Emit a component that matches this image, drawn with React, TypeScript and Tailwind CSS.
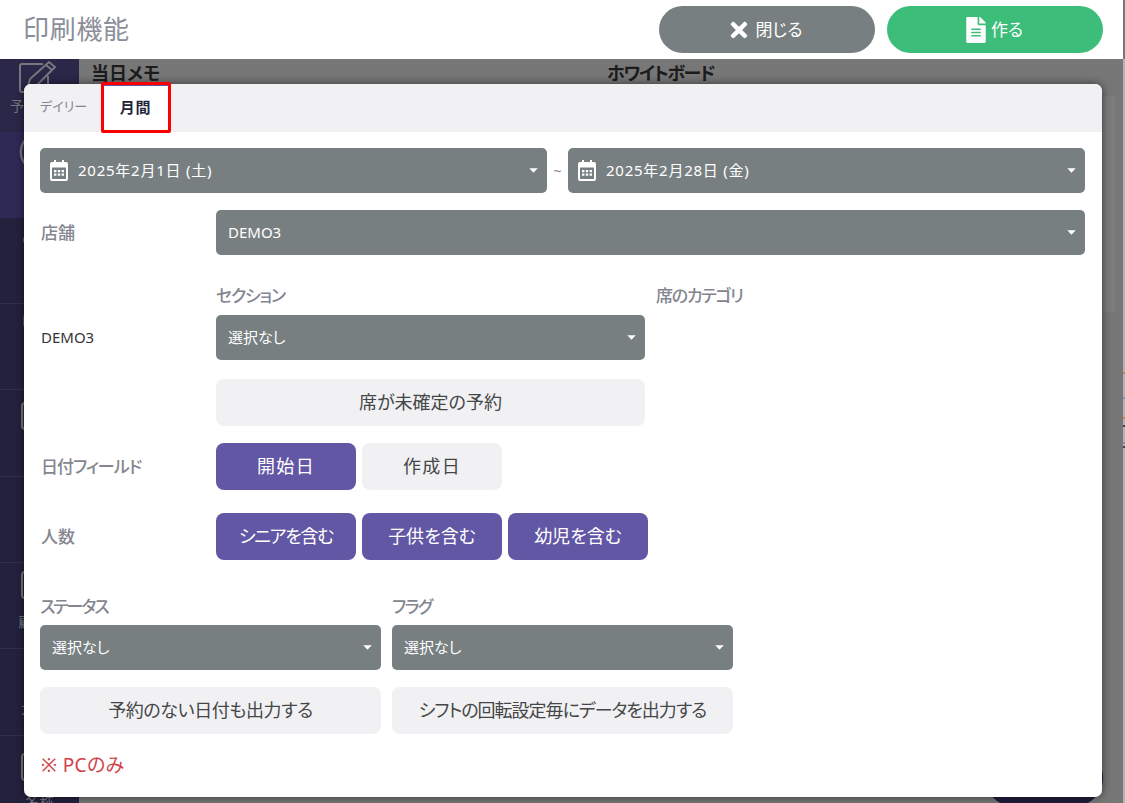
import React from "react";
import { FaTimes, FaFileAlt } from "react-icons/fa";
import { Clock } from "lucide-react";

const font = "[font-family:'Noto_Sans','Noto_Sans_CJK_JP',sans-serif] [font-feature-settings:'palt']";

function Cal() {
  return (
    <svg width="18" height="21" viewBox="0 0 18 21" className="shrink-0" fill="none">
      <path d="M4 0h2v3H4zM12 0h2v3h-2z" fill="#fff" />
      <path d="M2 2h14a2 2 0 0 1 2 2v15a2 2 0 0 1-2 2H2a2 2 0 0 1-2-2V4a2 2 0 0 1 2-2zm0 5.5V19h14V7.5z" fill="#fff" fillRule="evenodd" />
      <path d="M4 10h2.4v2.2H4zM7.8 10h2.4v2.2H7.8zM11.6 10H14v2.2h-2.4zM4 13.6h2.4v2.2H4zM7.8 13.6h2.4v2.2H7.8zM11.6 13.6H14v2.2h-2.4z" fill="#fff" />
    </svg>
  );
}

function Caret() {
  return (
    <svg width="9" height="5" viewBox="0 0 9 5" className="shrink-0">
      <path d="M0.3 0.3h8.4L4.5 4.8z" fill="#fff" />
    </svg>
  );
}

function NoteIcon() {
  return (
    <svg width="40" height="36" viewBox="0 0 40 36" fill="none" stroke="#77777f" strokeWidth="2">
      <path d="M24 4H3a2 2 0 0 0-2 2v24a2 2 0 0 0 2 2h24a2 2 0 0 0 2-2V16" />
      <path d="M9 26l2-7L30 2l6 5-18 18z" />
      <path d="M27 5l6 5" />
    </svg>
  );
}

function Select({ children, date, className }: { children: React.ReactNode; date?: boolean; className: string }) {
  return (
    <div className={`h-[45px] flex items-center rounded-[5px] bg-[#787f81] text-white text-[15px] pr-[9px] ${date ? "pl-[10px]" : "pl-[12px]"} ${className}`}>
      {date && <span className="mr-[10px] flex"><Cal /></span>}
      <span className={`flex-1 ${date ? "tracking-[0.75px]" : ""}`}>{children}</span>
      <Caret />
    </div>
  );
}

function Pill({ children, on, className }: { children: React.ReactNode; on?: boolean; className: string }) {
  return (
    <div className={`h-[47px] flex items-center justify-center rounded-[8px] text-[18px] ${on ? "bg-[#6257a4] text-white" : "bg-[#f1f1f3] text-[#444648]"} ${className}`}>
      {children}
    </div>
  );
}

const Label = ({ children, className = "" }: { children: React.ReactNode; className?: string }) => (
  <div className={`text-[17px] font-medium text-[#83868f] ${className}`}>{children}</div>
);

function SideItem({ h, active, icon, label, line = true }: { h: number; active?: boolean; icon?: React.ReactNode; label: string; line?: boolean }) {
  return (
    <div
      style={{ height: h }}
      className={`flex flex-col items-center justify-end pb-[17px] text-[14px] text-[#77777f] ${active ? "bg-[#2e2a55]" : ""} ${line ? "border-b border-[#322f4c]" : ""}`}
    >
      <div className="mb-[6px] flex h-[40px] items-center">{icon}</div>
      <div className="h-[20px] whitespace-nowrap">{label}</div>
    </div>
  );
}

const Box = ({ c = "" }: { c?: string }) => <div className={`w-[38px] h-[28px] rounded-[4px] border-2 border-[#77777f] ${c}`} />;

export default function App() {
  return (
    <div className={`relative h-[803px] w-[1125px] overflow-hidden bg-[#777777] ${font}`}>
      <header className="relative z-10 flex h-[59px] w-[1123px] items-center bg-white pl-[23px] pr-[20px]">
        <div className="flex-1 text-[26px] tracking-[0.7px] text-[#8b8e99]">印刷機能</div>
        <div className="mr-[12px] flex h-[47px] w-[216px] items-center justify-center gap-[4px] rounded-[24px] bg-[#787f81] pr-[4px] text-[17px] text-white">
          <FaTimes className="h-[24px] w-[24px]" />
          <span>閉じる</span>
        </div>
        <div className="flex h-[47px] w-[216px] items-center justify-center gap-[5px] rounded-[24px] bg-[#3dbd7a] pr-[1px] text-[17px] text-white">
          <FaFileAlt className="h-[26px] w-[20px]" />
          <span>作る</span>
        </div>
      </header>

      <div className="flex h-[744px]">
        <aside className="w-[79px] shrink-0 bg-[#24213e]">
          <div className="h-[73px] bg-[#2a2749] pl-[19px] pt-[1px] text-[14px] text-[#77777f]">
            <NoteIcon />
            <div className="-ml-[9px] -mt-[1px] whitespace-nowrap">予約台帳</div>
          </div>
          <SideItem h={86} active icon={<Clock className="mb-[6px] h-[46px] w-[46px]" strokeWidth={1.2} />} label="" line={false} />
          <SideItem h={86} icon={<div className="h-[6px] w-[34px] rounded-[2px] border-l-2 border-[#66656f]" />} label="" />
          <SideItem h={86} icon={<div className="mb-[10px] h-[12px] w-[34px] rounded-[2px] border-l-2 border-[#55545f]" />} label="設定" />
          <SideItem h={87} icon={<Box c="mt-[6px] w-[36px] bg-[#55545f]/30" />} label="" />
          <SideItem h={86} icon={<Clock className="h-[32px] w-[32px]" strokeWidth={1.5} />} label="オプ" />
          <SideItem h={86} icon={<Box />} label="顧客管" />
          <SideItem h={87} label="カレン" />
          <div className="flex flex-col items-center pt-[17px] text-[14px] text-[#77777f]">
            <Box />
            <div className="mt-[9px]">名称</div>
          </div>
        </aside>
        <main className="relative flex flex-1 pl-[12px] pt-[1px] text-[18px] font-bold text-[#1c1c1c]">
          <div className="w-[516px]">当日メモ</div>
          <div className="tracking-[-1.4px]">ホワイトボード</div>
          <div className="absolute right-[10px] top-[37px] h-[216px] w-[12px] bg-[#7d7d7d]" />
          <div className="absolute bottom-[-3px] right-[22px] h-[56px] w-[118px] rounded-[28px] bg-[#211c3c]" />
          <div className="absolute right-0 top-0 flex h-full w-[2px] flex-col bg-[#b4b4b4]">
            <div className="mt-[313px] h-[2px] bg-[#c08a50]" />
            <div className="mt-[23px] h-[2px] bg-[#6a9cc4]" />
            <div className="mt-[18px] h-[2px] bg-[#c08a50]" />
            <div className="mt-[6px] h-[2px] bg-[#444444]" />
            <div className="mt-[15px] h-[2px] bg-[#6a9cc4]" />
            <div className="mt-[2px] h-[2px] bg-[#444444]" />
          </div>
        </main>
      </div>

      <div className="absolute left-[24px] top-[84px] h-[713px] w-[1078px] overflow-hidden rounded-[7px] bg-white shadow-[0_0_10px_rgba(0,0,0,0.55)]">
        <div className="flex h-[48px] bg-[#f1f1f3] pb-[3px] pl-[16px]">
          <div className="flex items-center text-[13px] text-[#83868f]">デイリー</div>
        </div>
        <div className="pl-[16px] pr-[17px] pt-[16px]">
          <div className="flex items-center">
            <Select date className="w-[507px]">2025年2月1日 (土)</Select>
            <div className="w-[21px] text-center text-[14px] text-[#83868f]">~</div>
            <Select date className="flex-1">2025年2月28日 (金)</Select>
          </div>

          <div className="mt-[17px] flex items-center">
            <Label className="w-[176px] pl-[1px] pt-[1px]">店舗</Label>
            <Select className="flex-1">DEMO3</Select>
          </div>

          <div className="mt-[28px] flex">
            <div className="w-[176px] pl-[1px] pt-[32px]">
              <div className="flex h-[45px] items-center text-[15px] text-[#333538]">DEMO3</div>
            </div>
            <div className="w-[429px]">
              <Label className="h-[32px] tracking-[-1.2px]">セクション</Label>
              <Select className="w-full">選択なし</Select>
              <Pill className="mt-[19px] w-full pb-[1px]">席が未確定の予約</Pill>
            </div>
            <Label className="ml-[11px] tracking-[-1.3px]">席のカテゴリ</Label>
          </div>

          <div className="mt-[17px] flex items-center">
            <Label className="w-[176px] pl-[1px] tracking-[-1px]">日付フィールド</Label>
            <div className="flex gap-[6px]">
              <Pill on className="w-[140px] tracking-[1.3px]">開始日</Pill>
              <Pill className="w-[140px] tracking-[1.3px]">作成日</Pill>
            </div>
          </div>

          <div className="mt-[23px] flex items-center">
            <Label className="w-[176px] pl-[1px]">人数</Label>
            <div className="flex gap-[6px]">
              <Pill on className="w-[140px] tracking-[-1.3px]">シニアを含む</Pill>
              <Pill on className="w-[140px]">子供を含む</Pill>
              <Pill on className="w-[140px]">幼児を含む</Pill>
            </div>
          </div>

          <div className="mt-[34px] flex gap-[11px]">
            <div className="w-[341px]">
              <Label className="h-[31px] tracking-[-2px]">ステータス</Label>
              <Select className="w-full">選択なし</Select>
              <Pill className="mt-[17px] w-full tracking-[-0.4px]">予約のない日付も出力する</Pill>
            </div>
            <div className="w-[341px]">
              <Label className="h-[31px] tracking-[-1.5px]">フラグ</Label>
              <Select className="w-full">選択なし</Select>
              <Pill className="mt-[17px] w-full tracking-[-1px]">シフトの回転設定毎にデータを出力する</Pill>
            </div>
          </div>

          <div className="mt-[17px] pl-[1px] text-[19px] tracking-[0.4px] text-[#d0434a]">※ PCのみ</div>
        </div>
      </div>

      <div className="absolute left-[101px] top-[82px] h-[51px] w-[70px] rounded-[2px] border-[3px] border-[#fa0000]">
        <div className="flex h-full items-center justify-center border-t border-[#6257a4] bg-white pb-[2px] pr-[1px] text-[15px] font-bold tracking-[0.8px] text-[#23263a]">月間</div>
      </div>
    </div>
  );
}
